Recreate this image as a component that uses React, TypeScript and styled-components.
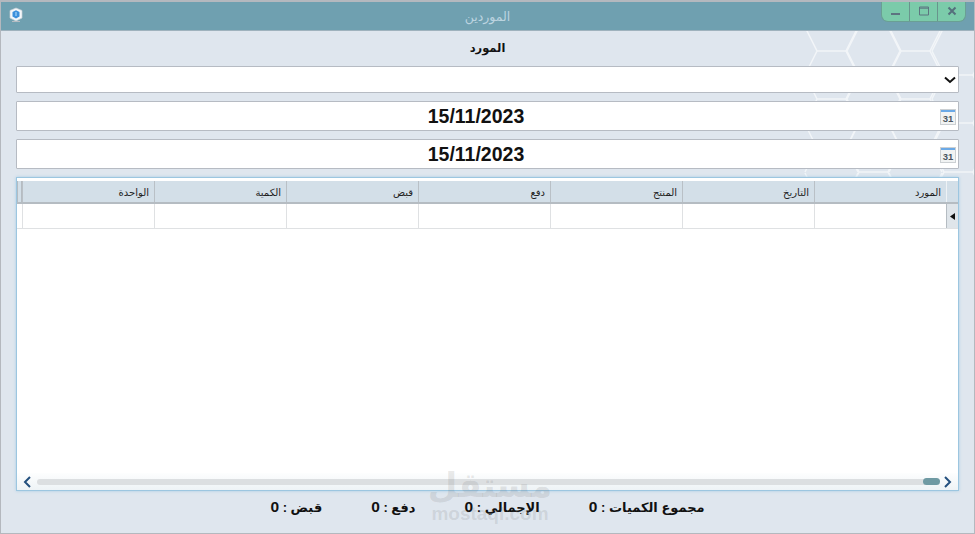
import { createGlobalStyle, styled } from "styled-components";

const columns = ["الواحدة", "الكمية", "قبض", "دفع", "المنتج", "التاريخ", "المورد"];
const totals = ["مجموع الكميات", "الإجمالي", "دفع", "قبض"];

// flat-topped hexagon tessellation, coordinates relative to the body's top right block
const hexColumns = [
  { x: 13, ys: [20, 68, 117, 166] },
  { x: 55, ys: [-4, 44, 92, 141] },
  { x: 97, ys: [20, 68, 117, 166] },
  { x: 140, ys: [-4, 44, 92, 141] },
];

const hexPath = hexColumns
  .flatMap(({ x, ys }) =>
    ys.map((y) => {
      const l = x;
      const r = x + 29;
      return `M${l - 12} ${y - 24} L${l} ${y} L${l - 12} ${y + 24} M${l} ${y} L${r} ${y} M${r + 12} ${y - 24} L${r} ${y} L${r + 12} ${y + 24}`;
    })
  )
  .join(" ");

function HexPattern() {
  return (
    <HexSvg viewBox="0 0 170 170" aria-hidden="true">
      <path d={hexPath} />
    </HexSvg>
  );
}

function AppIcon() {
  return (
    <TitleIcon viewBox="0 0 16 16" aria-hidden="true">
      <path d="M2 3.5 L8 1 L14 3.5 L14 11 L8 14 L2 11 Z" fill="#f4f7fa" stroke="#c6ced5" strokeWidth="0.7" />
      <path d="M4.5 5 L8 3.2 L11.5 5 L11.5 9.5 L8 11.6 L4.5 9.5 Z" fill="#3b8fdc" />
      <path d="M8 5 L8 9" stroke="#a5d2f5" strokeWidth="1.2" />
      <path d="M4 14.5 L12 14.5" stroke="#b5bcc2" strokeWidth="1" />
    </TitleIcon>
  );
}

function CalendarIcon() {
  return (
    <CalendarSvg viewBox="0 0 16 16" aria-hidden="true">
      <rect x="0.5" y="0.5" width="15" height="15" fill="#f1f3f3" stroke="#ccd0d3" />
      <rect x="1" y="1" width="14" height="2" fill="#6ba9e6" />
      <text x="8" y="13" textAnchor="middle" fontSize="9.5" fontWeight="700" fontFamily="Liberation Sans, sans-serif" fill="#4a5560">
        31
      </text>
    </CalendarSvg>
  );
}

function DateField({ value }: { value: string }) {
  return (
    <DateBox>
      <DateText>{value}</DateText>
      <CalendarIcon />
    </DateBox>
  );
}

export default function App() {
  return (
    <Window>
      <GlobalStyle />
      <TitleBar>
        <AppIcon />
        <TitleText>الموردين</TitleText>
      </TitleBar>
      <WindowButtons>
        <WindowButton>
          <svg width="12" height="12" viewBox="0 0 12 12"><rect x="1" y="8" width="9" height="2" fill="#5d7480" /></svg>
        </WindowButton>
        <WindowButton>
          <svg width="12" height="12" viewBox="0 0 12 12"><path d="M1.5 2 H10.5 V10 H1.5 Z M1.5 3.2 H10.5" fill="none" stroke="#5d7480" /></svg>
        </WindowButton>
        <WindowButton>
          <svg width="12" height="12" viewBox="0 0 12 12"><path d="M2.5 2.5 L9.5 9.5 M9.5 2.5 L2.5 9.5" stroke="#55707c" strokeWidth="2" /></svg>
        </WindowButton>
      </WindowButtons>

      <Body>
        <HexPattern />
        <FieldLabel>المورد</FieldLabel>
        <SelectBox>
          <svg width="12" height="8" viewBox="0 0 12 8"><path d="M1 1.5 L6 6 L11 1.5" fill="none" stroke="#111" strokeWidth="2" /></svg>
        </SelectBox>
        <DateField value="15/11/2023" />
        <DateField value="15/11/2023" />

        <GridPanel>
          <GridArea>
            <HeaderRow>
              <Grip />
              {columns.map((c) => (
                <HeaderCell key={c}>{c}</HeaderCell>
              ))}
              <RowHeaderTop />
            </HeaderRow>
            <DataRow>
              <RowStart />
              {columns.map((c) => (
                <DataCell key={c} />
              ))}
              <RowMarker>
                <svg width="5" height="7" viewBox="0 0 5 7"><path d="M5 0 V7 L0 3.5 Z" fill="#111" /></svg>
              </RowMarker>
            </DataRow>
          </GridArea>
          <ScrollBar>
            <svg width="9" height="12" viewBox="0 0 9 12"><path d="M7 1 L2 6 L7 11" fill="none" stroke="#24507e" strokeWidth="2" /></svg>
            <ScrollTrack>
              <ScrollThumb />
            </ScrollTrack>
            <svg width="9" height="12" viewBox="0 0 9 12"><path d="M2 1 L7 6 L2 11" fill="none" stroke="#24507e" strokeWidth="2" /></svg>
          </ScrollBar>
        </GridPanel>

        <Footer>
          {totals.map((t) => (
            <Total key={t}>
              {t} : <TotalValue>0</TotalValue>
            </Total>
          ))}
        </Footer>
      </Body>

      <Watermark>
        <WatermarkLogo>مستقل</WatermarkLogo>
        <WatermarkUrl>mostaql.com</WatermarkUrl>
      </Watermark>
    </Window>
  );
}

const GlobalStyle = createGlobalStyle`
  html, body {
    margin: 0;
    padding: 0;
    width: 975px;
    height: 534px;
    overflow: hidden;
    background: #dfe6ee;
    font-family: "DejaVu Sans", "Liberation Sans", sans-serif;
  }
  * { box-sizing: border-box; }
`;

const Window = styled.div`
  position: relative;
  display: flex;
  flex-direction: column;
  width: 975px;
  height: 534px;
  background: #dfe6ee;
  border: 1px solid #b4b8be;
  border-top: 2px solid #b4b8be;
  overflow: hidden;
`;

const TitleBar = styled.div`
  position: relative;
  display: flex;
  align-items: center;
  justify-content: center;
  flex: 0 0 29px;
  background: #6fa0b0;
  border-bottom: 1px solid #9fb2bd;
`;

const TitleIcon = styled.svg`
  position: absolute;
  left: 7px;
  top: 5px;
  width: 16px;
  height: 16px;
`;

const TitleText = styled.span`
  color: #bcd4e0;
  font-size: 12.5px;
  direction: rtl;
`;

const WindowButtons = styled.div`
  position: absolute;
  top: -2px;
  right: 8px;
  display: flex;
  width: 85px;
  height: 22px;
  background: #7bcbaa;
  border: 1px solid #6a9f94;
  border-top: none;
  border-radius: 0 0 7px 7px;
`;

const WindowButton = styled.div`
  flex: 1;
  display: flex;
  align-items: center;
  justify-content: center;
  & + & {
    border-left: 1px solid #69948d;
  }
`;

const Body = styled.div`
  position: relative;
  flex: 1;
  display: flex;
  flex-direction: column;
  padding: 0 15px;
`;

const HexSvg = styled.svg`
  position: absolute;
  top: 0;
  right: 0;
  width: 170px;
  height: 170px;
  fill: none;
  stroke: #f2f5f8;
  stroke-width: 1.5;
`;

const FieldLabel = styled.div`
  position: relative;
  height: 35px;
  padding-top: 10px;
  text-align: center;
  direction: rtl;
  font-size: 11.5px;
  font-weight: 700;
  color: #111;
`;

const SelectBox = styled.div`
  position: relative;
  display: flex;
  align-items: center;
  justify-content: flex-end;
  height: 27px;
  padding-right: 2px;
  background: #fff;
  border: 1px solid #b6bbc3;
  border-radius: 1px;
`;

const DateBox = styled.div`
  position: relative;
  display: flex;
  align-items: center;
  height: 30px;
  margin-top: 8px;
  padding-right: 2px;
  background: #fff;
  border: 1px solid #b6bbc3;
  border-radius: 1px;
`;

const DateText = styled.div`
  flex: 1;
  padding-right: 5px;
  text-align: center;
  font-family: "Liberation Sans", sans-serif;
  font-size: 19.5px;
  font-weight: 700;
  color: #111;
`;

const CalendarSvg = styled.svg`
  flex: 0 0 16px;
  width: 16px;
  height: 16px;
  margin-top: 2px;
`;

const GridPanel = styled.div`
  position: relative;
  display: flex;
  flex-direction: column;
  height: 314px;
  margin-top: 8px;
  background: #fff;
  border: 1px solid #9cc6e0;
  box-shadow: 0 0 3px #a9cde4;
`;

const GridArea = styled.div`
  flex: 1;
  padding-top: 3px;
`;

const HeaderRow = styled.div`
  display: flex;
  height: 23px;
  background: #d3dfe8;
  border-bottom: 2px solid #b5bcc2;
`;

const Grip = styled.div`
  flex: 0 0 5px;
  border-left: 1px solid #b5bcc2;
  border-right: 1px solid #b5bcc2;
`;

const HeaderCell = styled.div`
  flex: 0 0 132px;
  padding: 6px 5px 0 0;
  direction: rtl;
  text-align: right;
  font-size: 10px;
  color: #222;
  border-left: 1px solid #b9c0c6;
`;

const RowHeaderTop = styled.div`
  flex: 1;
  border-left: 1px solid #eef2f5;
`;

const DataRow = styled.div`
  display: flex;
  height: 25px;
  border-bottom: 1px solid #dfe1e3;
`;

const RowStart = styled.div`
  flex: 0 0 5px;
`;

const DataCell = styled.div`
  flex: 0 0 132px;
  border-left: 1px solid #dfe1e3;
`;

const RowMarker = styled.div`
  flex: 1;
  display: flex;
  align-items: center;
  justify-content: center;
  background: #dfe5ea;
  border-left: 1px solid #b5bcc2;
`;

const ScrollBar = styled.div`
  display: flex;
  align-items: center;
  gap: 5px;
  height: 17px;
  padding: 0 6px;
  background: linear-gradient(#fdfefe, #eef3f6);
`;

const ScrollTrack = styled.div`
  position: relative;
  flex: 1;
  height: 6px;
  border-radius: 3px;
  background: #dcdfe1;
`;

const ScrollThumb = styled.div`
  position: absolute;
  right: -2px;
  top: -1px;
  width: 17px;
  height: 7px;
  border-radius: 4px;
  background: #6f9aa3;
`;

const Footer = styled.div`
  display: flex;
  justify-content: center;
  align-items: baseline;
  gap: 49px;
  padding-top: 7px;
  direction: rtl;
`;

const Total = styled.div`
  font-family: "Liberation Sans", "DejaVu Sans", sans-serif;
  font-size: 13px;
  font-weight: 700;
  color: #111;
`;

const TotalValue = styled.span`
  font-size: 15.5px;
`;

const Watermark = styled.div`
  position: absolute;
  left: 431px;
  top: 464px;
  width: 116px;
  display: flex;
  flex-direction: column;
  align-items: center;
  color: rgba(90, 90, 90, 0.14);
  pointer-events: none;
`;

const WatermarkLogo = styled.div`
  font-size: 34px;
  font-weight: 700;
  line-height: 38px;
  direction: rtl;
`;

const WatermarkUrl = styled.div`
  font-family: "Liberation Sans", sans-serif;
  font-size: 19px;
  font-weight: 700;
  line-height: 20px;
`;
